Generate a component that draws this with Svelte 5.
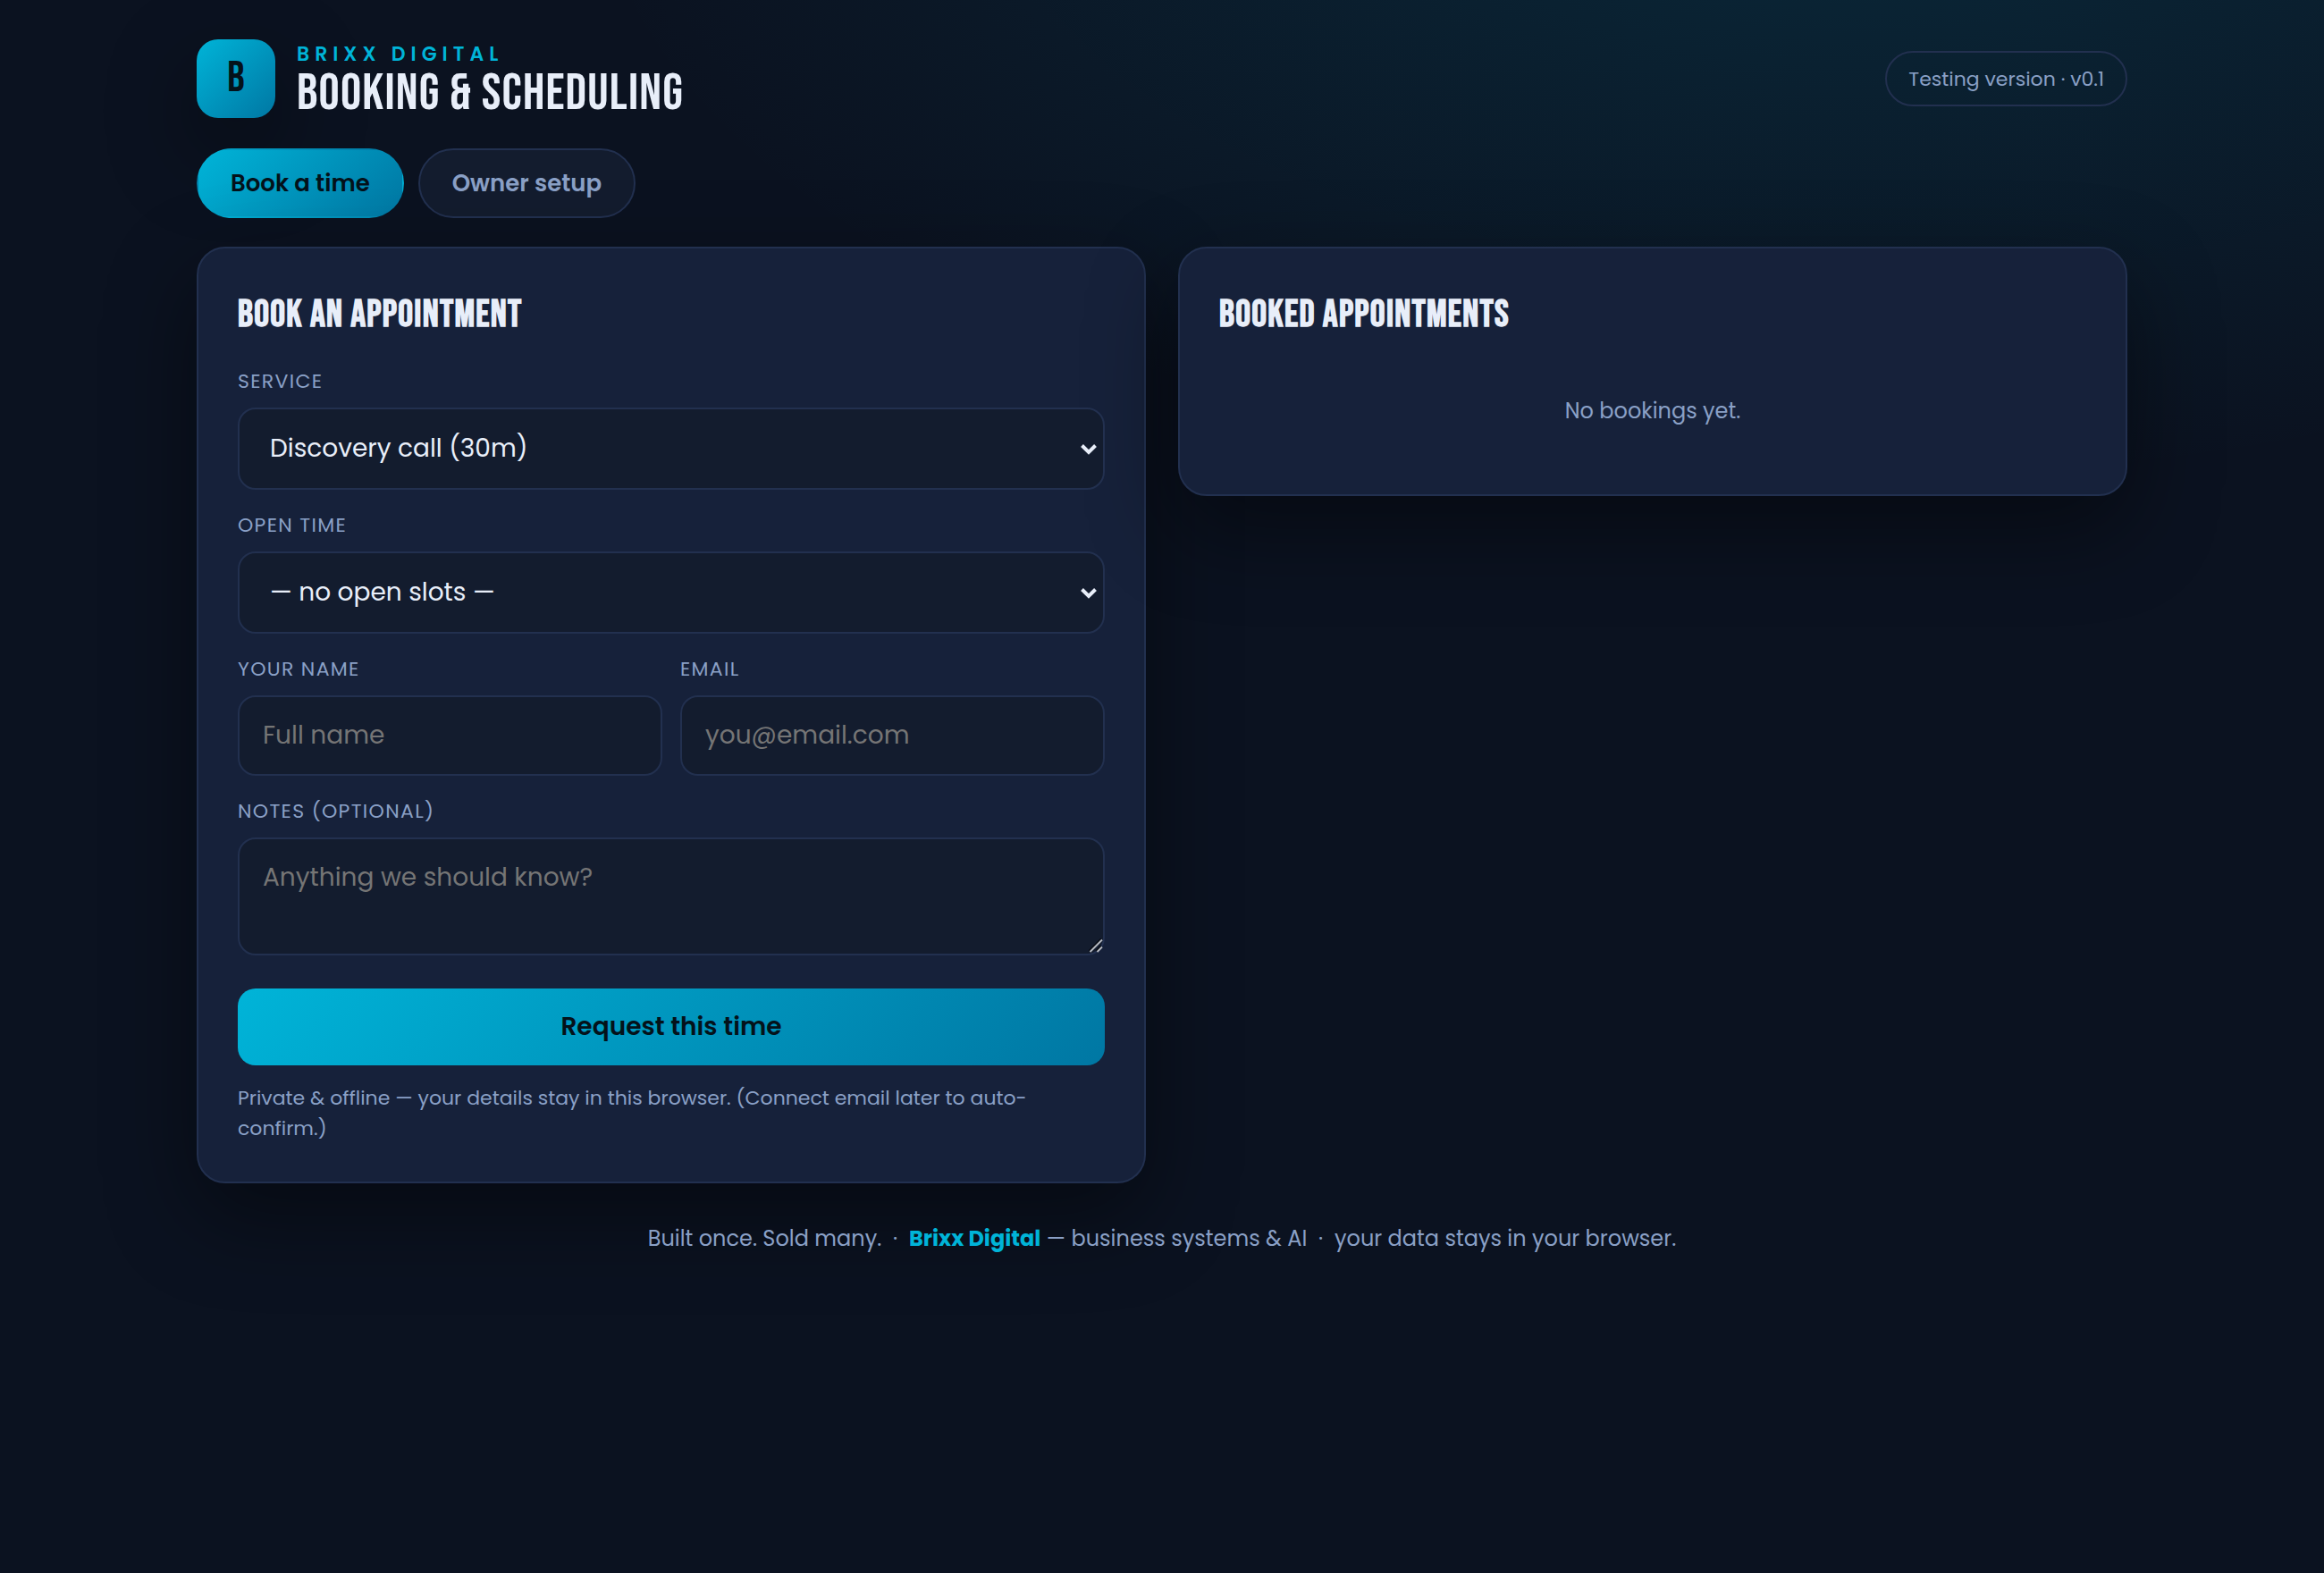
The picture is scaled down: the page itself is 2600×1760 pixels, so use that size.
<script>
	let tab = $state("book");
	let bookings = $state([]);

	const tabs = [
		{ id: "book", label: "Book a time" },
		{ id: "owner", label: "Owner setup" },
	];

	const services = [{ name: "Discovery call", minutes: 30 }];
	let slots = $state([]);

	let service = $state("Discovery call");
	let slot = $state("");
	let name = $state("");
	let email = $state("");
	let notes = $state("");

	function requestTime(e) {
		e.preventDefault();
		if (!slot || !name) return;
		bookings.push({ service, slot, name, email, notes });
		slots = slots.filter((s) => s !== slot);
		slot = "";
		name = "";
		email = "";
		notes = "";
	}
</script>

{#snippet chevron()}
	<svg class="chevron" viewBox="0 0 20 14" aria-hidden="true">
		<path d="M2.5 2.5 L10 10 L17.5 2.5" />
	</svg>
{/snippet}

<div class="wrap">
	<header>
		<div class="logo">B</div>
		<div class="titles">
			<div class="brand">BRIXX DIGITAL</div>
			<h1>BOOKING &amp; SCHEDULING</h1>
		</div>
		<span class="pill">Testing version · v0.1</span>
	</header>

	<nav>
		{#each tabs as t}
			<button class="tab" class:active={tab === t.id} onclick={() => (tab = t.id)}>{t.label}</button>
		{/each}
	</nav>

	<main>
		<form class="card" onsubmit={requestTime}>
			<h2>BOOK AN APPOINTMENT</h2>

			<div class="field">
				<label for="service">SERVICE</label>
				<div class="control">
					<select id="service" bind:value={service}>
						{#each services as s}
							<option value={s.name}>{s.name} ({s.minutes}m)</option>
						{/each}
					</select>
					{@render chevron()}
				</div>
			</div>

			<div class="field">
				<label for="slot">OPEN TIME</label>
				<div class="control">
					<select id="slot" bind:value={slot}>
						{#each slots as s}
							<option value={s}>{s}</option>
						{:else}
							<option value="">— no open slots —</option>
						{/each}
					</select>
					{@render chevron()}
				</div>
			</div>

			<div class="row">
				<div class="field">
					<label for="name">YOUR NAME</label>
					<input id="name" type="text" placeholder="Full name" bind:value={name} />
				</div>
				<div class="field">
					<label for="email">EMAIL</label>
					<input id="email" type="email" placeholder="you@email.com" bind:value={email} />
				</div>
			</div>

			<div class="field">
				<label for="notes">NOTES (OPTIONAL)</label>
				<div class="control">
					<textarea id="notes" placeholder="Anything we should know?" bind:value={notes}></textarea>
					<svg class="grip" viewBox="0 0 16 16" aria-hidden="true">
						<path class="dark" d="M0.5 14 L14 0.5 M8.5 14 L14 8.5" />
						<path d="M1.5 15 L15 1.5 M9.5 15 L15 9.5" />
					</svg>
				</div>
			</div>

			<button class="submit" type="submit">Request this time</button>
			<p class="hint">
				Private &amp; offline — your details stay in this browser. (Connect email later to auto-confirm.)
			</p>
		</form>

		<section class="card">
			<h2>BOOKED APPOINTMENTS</h2>
			{#each bookings as b}
				<p class="booking">{b.name} — {b.service}, {b.slot}</p>
			{:else}
				<p class="empty">No bookings yet.</p>
			{/each}
		</section>
	</main>

	<footer>
		Built once. Sold many. &nbsp;·&nbsp; <strong>Brixx Digital</strong> — business systems &amp; AI
		&nbsp;·&nbsp; your data stays in your browser.
	</footer>
</div>

<style>
	:global(body) {
		min-height: 100vh;
		color: #e8eef9;
		font-family: Poppins, Inter, "Open Sans", sans-serif;
		background: radial-gradient(2400px 1200px at 80% -10%, rgba(0, 180, 216, 0.14), transparent 60%) no-repeat #0b1220;
	}

	* {
		box-sizing: border-box;
	}

	.wrap {
		max-width: 2160px;
		margin: 0 auto;
		padding: 44px 0;
	}

	header {
		display: flex;
		align-items: center;
		gap: 24px;
	}

	.logo {
		display: grid;
		place-items: center;
		width: 88px;
		height: 88px;
		padding-bottom: 2px;
		border-radius: 24px;
		background: linear-gradient(135deg, #00b4d8, #0077a3);
		box-shadow: 0 36px 100px rgba(0, 0, 0, 0.45);
		color: #04121a;
		font-family: "Bebas Neue", "Roboto Condensed", "Liberation Sans Narrow", "DejaVu Sans Condensed", sans-serif;
		font-size: 48px;
	}

	.titles {
		flex: 1;
	}

	.brand {
		color: #00b4d8;
		font-size: 22px;
		font-weight: 600;
		line-height: 34px;
		letter-spacing: 6px;
	}

	h1,
	h2 {
		margin: 0;
		font-family: "Bebas Neue", "Roboto Condensed", "Liberation Sans Narrow", "DejaVu Sans Condensed", sans-serif;
	}

	h1 {
		font-size: 58px;
		font-weight: 400;
		line-height: 54px;
		letter-spacing: 0.02em;
	}

	h2 {
		margin-bottom: 28px;
		padding-top: 3px;
		font-size: 42px;
		font-weight: 700;
		line-height: 56px;
		letter-spacing: 0.03em;
	}

	.pill {
		padding: 13px 24px 11px;
		border: 2px solid #22304f;
		border-radius: 999px;
		color: #8aa0c6;
		font-size: 22px;
		line-height: 34px;
	}

	nav {
		display: flex;
		gap: 16px;
		margin: 34px 0 32px;
	}

	.tab {
		padding: 18px 36px;
		border: 2px solid #22304f;
		border-radius: 999px;
		background: #131c2e;
		color: #8aa0c6;
		font: inherit;
		font-size: 26px;
		font-weight: 600;
		line-height: 38px;
		cursor: pointer;
	}

	.tab.active {
		border-color: transparent;
		background: linear-gradient(135deg, #00b4d8, #0077a3);
		color: #04121a;
	}

	main {
		display: grid;
		grid-template-columns: 1fr 1fr;
		align-items: start;
		gap: 36px;
	}

	.card {
		padding: 44px 44px 42px;
		border: 2px solid #22304f;
		border-radius: 32px;
		background: #16213a;
		box-shadow: 0 36px 100px rgba(0, 0, 0, 0.45);
	}

	.field {
		flex: 1;
		min-width: 0;
		margin-bottom: 22px;
	}

	.row {
		display: flex;
		gap: 20px;
	}

	label {
		display: block;
		margin-bottom: 11px;
		color: #8aa0c6;
		font-size: 22px;
		line-height: 36px;
		letter-spacing: 0.06em;
	}

	.control {
		position: relative;
	}

	input,
	select,
	textarea {
		display: block;
		width: 100%;
		padding: 22px 26px;
		border: 2px solid #22304f;
		border-radius: 20px;
		background: #131c2e;
		color: #e8eef9;
		font: inherit;
		font-size: 28px;
		line-height: 42px;
	}

	input {
		height: 90px;
	}

	select {
		height: 92px;
		padding-left: 34px;
		appearance: none;
	}

	textarea {
		height: 132px;
		resize: none;
	}

	input::placeholder,
	textarea::placeholder {
		color: #757575;
	}

	.chevron {
		position: absolute;
		top: 40px;
		right: 8px;
		width: 20px;
		height: 14px;
		fill: none;
		stroke: #e8eef9;
		stroke-width: 4;
		pointer-events: none;
	}

	.grip {
		position: absolute;
		right: 2px;
		bottom: 3px;
		width: 16px;
		height: 16px;
		fill: none;
		stroke: #b4b8c0;
		stroke-width: 2;
		pointer-events: none;
	}

	.grip .dark {
		stroke: #060a12;
	}

	.submit {
		display: block;
		width: 100%;
		margin-top: 37px;
		padding: 22px;
		border: 0;
		border-radius: 20px;
		background: linear-gradient(135deg, #00b4d8, #0077a3);
		color: #04121a;
		font: inherit;
		font-size: 28px;
		font-weight: 600;
		line-height: 42px;
		cursor: pointer;
	}

	.hint {
		margin: 20px 0 0;
		color: #8aa0c6;
		font-size: 22px;
		line-height: 34px;
	}

	.empty,
	.booking {
		margin: 0;
		padding: 32px 0;
		color: #8aa0c6;
		font-size: 24px;
		line-height: 38px;
	}

	.empty {
		text-align: center;
	}

	footer {
		margin-top: 44px;
		color: #8aa0c6;
		font-size: 24px;
		line-height: 36px;
		text-align: center;
	}

	strong {
		color: #00b4d8;
	}
</style>
